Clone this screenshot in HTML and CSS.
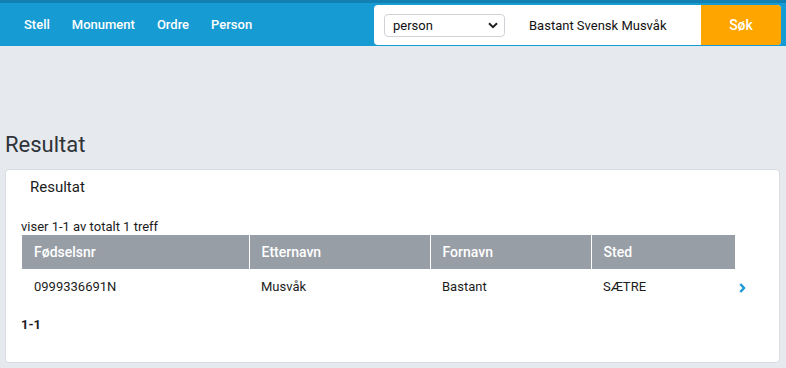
FILE: index.html
```html
<!DOCTYPE html>
<html lang="no">
<head>
<meta charset="utf-8">
<title>Resultat</title>
<link rel="stylesheet" href="styles.css">
</head>
<body>
<header class="topbar">
  <nav class="nav">
    <a class="nav-link" href="#">Stell</a>
    <a class="nav-link" href="#">Monument</a>
    <a class="nav-link" href="#">Ordre</a>
    <a class="nav-link" href="#">Person</a>
  </nav>
  <div class="search">
    <div class="select">
      <span class="select-value">person</span>
      <svg class="select-arrow" width="10" height="7" viewBox="0 0 10 7"><path d="M1 1.2 L5 5.2 L9 1.2" fill="none" stroke="#222" stroke-width="2"/></svg>
    </div>
    <div class="query">Bastant Svensk Musvåk</div>
    <button class="go" type="button">Søk</button>
  </div>
</header>
<main class="content">
  <h1 class="page-title">Resultat</h1>
  <section class="card">
    <h2 class="card-title">Resultat</h2>
    <p class="count">viser 1-1 av totalt 1 treff</p>
    <table class="results">
      <thead>
        <tr>
          <th class="c1">Fødselsnr</th>
          <th class="c2">Etternavn</th>
          <th class="c3">Fornavn</th>
          <th class="c4">Sted</th>
          <th class="c5"></th>
        </tr>
      </thead>
      <tbody>
        <tr>
          <td>0999336691N</td>
          <td>Musvåk</td>
          <td>Bastant</td>
          <td>SÆTRE</td>
          <td class="go-cell"><svg width="7" height="10" viewBox="0 0 7 10"><path d="M1.3 1 L5 5 L1.3 9" fill="none" stroke="#1a9ad6" stroke-width="2.4"/></svg></td>
        </tr>
      </tbody>
    </table>
    <p class="pager">1-1</p>
  </section>
</main>
</body>
</html>
```
FILE: styles.css
```css
* { box-sizing: border-box; }
html, body {
  margin: 0;
  padding: 0;
  background: #e6e9ee;
  font-family: Roboto, "Liberation Sans", sans-serif;
  color: #1c1c1c;
}
.topbar {
  height: 46px;
  background: #179bd3;
  border-top: 3px solid #1380b3;
  display: flex;
  align-items: center;
  justify-content: space-between;
  padding: 0 5px 0 24px;
}
.nav {
  display: flex;
  gap: 22px;
  align-items: center;
}
.nav-link {
  color: #fff;
  text-decoration: none;
  font-size: 13px;
  font-weight: 500;
}
.search {
  display: flex;
  align-items: center;
  background: #fff;
  height: 40px;
  width: 407px;
  border-radius: 4px;
  overflow: hidden;
  margin-top: 1px;
  padding-left: 10px;
}
.select {
  width: 121px;
  height: 23px;
  border: 1px solid #cfd3d8;
  border-radius: 4px;
  display: flex;
  align-items: center;
  justify-content: space-between;
  padding: 0 6px 0 8px;
  font-size: 13px;
  color: #111;
}
.query {
  flex: 1;
  padding-left: 24px;
  font-size: 13px;
  color: #111;
}
.go {
  width: 80px;
  height: 40px;
  border: 0;
  background: #ffa500;
  color: #fff;
  font-family: inherit;
  font-size: 14px;
  font-weight: 500;
}
.content {
  padding: 0 6px 0 5px;
}
.page-title {
  margin: 85px 0 10px;
  font-size: 22px;
  line-height: 28px;
  font-weight: 400;
  color: #2f3338;
}
.card {
  background: #fff;
  border: 1px solid #d9dce1;
  border-radius: 4px;
  padding: 7px 16px 29px 16px;
}
.card-title {
  margin: 0 0 22px 8px;
  font-size: 15px;
  line-height: 20px;
  font-weight: 400;
  color: #1c1c1c;
}
.count {
  margin: 0 0 0 -1px;
  font-size: 13px;
  line-height: 16px;
}
.results {
  border-collapse: collapse;
  margin-top: 0;
}
.results th {
  background: #989ea6;
  color: #fff;
  font-weight: 500;
  font-size: 14px;
  text-align: left;
  height: 34px;
  padding: 0 12px;
  border-left: 1px solid #fff;
}
.results th:first-child { border-left: 0; }
.results th.c5 { background: transparent; border-left: 0; }
.c1 { width: 227px; }
.c2 { width: 181px; }
.c3 { width: 161px; }
.c4 { width: 144px; }
.c5 { width: 25px; }
.results td {
  font-size: 13px;
  height: 34px;
  padding: 0 12px;
  color: #1c1c1c;
}
.results td.go-cell {
  padding: 4px 0 0 4px;
}
.pager {
  margin: 14px 0 0 -1px;
  font-size: 13px;
  line-height: 16px;
  font-weight: 700;
}
```
